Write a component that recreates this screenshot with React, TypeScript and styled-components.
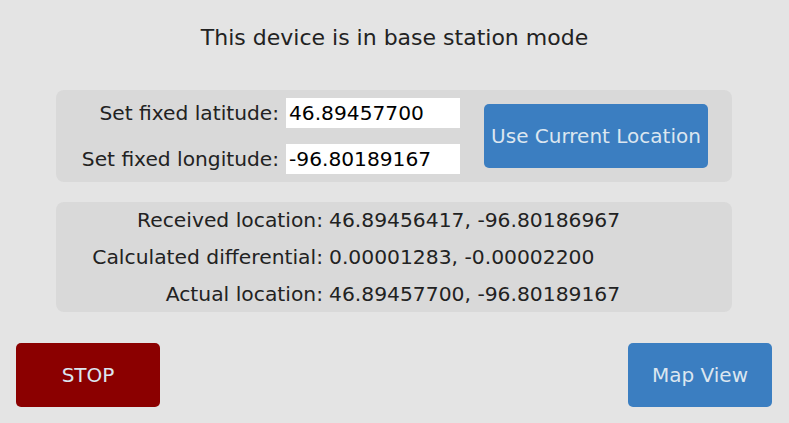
import React from "react";
import styled, { createGlobalStyle } from "styled-components";

const Global = createGlobalStyle`
  html, body { margin: 0; padding: 0; background: #e4e4e4; }
  body { font-family: "DejaVu Sans", sans-serif; color: #222; }
`;

const Page = styled.div`
  width: 789px;
  height: 423px;
  box-sizing: border-box;
  display: flex;
  flex-direction: column;
  background: #e4e4e4;
`;

const Title = styled.h1`
  margin: 0;
  padding-top: 24px;
  height: 64px;
  box-sizing: border-box;
  font-size: 22px;
  line-height: 28px;
  font-weight: normal;
  text-align: center;
  color: #222;
`;

const Panel = styled.section<{ $mt: number; $h: number }>`
  margin: ${(p) => p.$mt}px 57px 0 56px;
  height: ${(p) => p.$h}px;
  background: #d9d9d9;
  border-radius: 8px;
  box-sizing: border-box;
`;

const SetPanel = styled(Panel)`
  display: flex;
  align-items: center;
  padding: 0 24px 0 0;
`;

const FieldGrid = styled.div`
  display: grid;
  grid-template-columns: 223px 174px;
  column-gap: 7px;
  row-gap: 16px;
  align-items: center;
`;

const Label = styled.span`
  font-size: 20.2px;
  text-align: right;
  color: #222;
`;

const Field = styled.input`
  height: 30px;
  border: none;
  outline: none;
  padding: 0 3px;
  box-sizing: border-box;
  font-family: "DejaVu Sans", sans-serif;
  font-size: 20.2px;
  color: #000;
  background: #fff;
  width: 174px;
`;

const Button = styled.button<{ $bg: string; $w: number }>`
  width: ${(p) => p.$w}px;
  height: 64px;
  border: none;
  border-radius: 5px;
  background: ${(p) => p.$bg};
  color: #dce6f0;
  font-family: "DejaVu Sans", sans-serif;
  font-size: 20px;
  padding: 0;
`;

const UseButton = styled(Button)`
  margin-left: auto;
`;

const InfoGrid = styled.div`
  display: grid;
  grid-template-columns: 267px auto;
  column-gap: 6px;
  padding-top: 6px;
`;

const InfoLabel = styled.span`
  font-size: 20.3px;
  text-align: right;
  height: 37px;
  line-height: 24px;
`;

const InfoValue = styled.span`
  font-size: 20.3px;
  height: 37px;
  line-height: 24px;
`;

const Footer = styled.div`
  display: flex;
  justify-content: space-between;
  padding: 31px 17px 0 16px;
`;

export default function App() {
  const rows: [string, string][] = [
    ["Received location:", "46.89456417, -96.80186967"],
    ["Calculated differential:", "0.00001283, -0.00002200"],
    ["Actual location:", "46.89457700, -96.80189167"],
  ];
  return (
    <Page>
      <Global />
      <Title>This device is in base station mode</Title>
      <SetPanel $mt={26} $h={92}>
        <FieldGrid>
          <Label>Set fixed latitude:</Label>
          <Field defaultValue="46.89457700" />
          <Label>Set fixed longitude:</Label>
          <Field defaultValue="-96.80189167" />
        </FieldGrid>
        <UseButton $bg="#3b7ec1" $w={224}>Use Current Location</UseButton>
      </SetPanel>
      <Panel $mt={20} $h={110}>
        <InfoGrid>
          {rows.map(([l, v]) => (
            <React.Fragment key={l}>
              <InfoLabel>{l}</InfoLabel>
              <InfoValue>{v}</InfoValue>
            </React.Fragment>
          ))}
        </InfoGrid>
      </Panel>
      <Footer>
        <Button $bg="#8b0000" $w={144}>STOP</Button>
        <Button $bg="#3b7ec1" $w={144}>Map View</Button>
      </Footer>
    </Page>
  );
}
